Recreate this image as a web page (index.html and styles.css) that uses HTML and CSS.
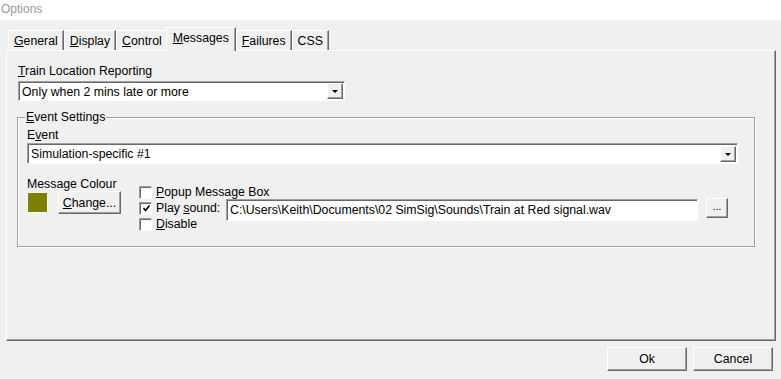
FILE: index.html
```html
<!DOCTYPE html>
<html lang="en">
<head>
<meta charset="utf-8">
<title>Options</title>
<link rel="stylesheet" href="styles.css">
</head>
<body>
	<div class="titlebar">Options</div>

	<div class="dialog">
		<div class="tabs">
			<div class="tab"><u>G</u>eneral</div>
			<div class="tab"><u>D</u>isplay</div>
			<div class="tab"><u>C</u>ontrol</div>
			<div class="tab active"><u>M</u>essages</div>
			<div class="tab"><u>F</u>ailures</div>
			<div class="tab">CSS</div>
		</div>

		<div class="page">
			<div class="label"><u>T</u>rain Location Reporting</div>
			<div class="combo report">
				<span class="combo-text">Only when 2 mins late or more</span>
				<span class="drop"></span>
			</div>

			<div class="group">
				<span class="legend"><u>E</u>vent Settings</span>
				<div class="label">E<u>v</u>ent</div>
				<div class="combo event">
					<span class="combo-text">Simulation-specific #1</span>
					<span class="drop"></span>
				</div>

				<div class="msg-row">
					<div class="colour-col">
						<div class="label">Message Colour</div>
						<div class="colour-row">
							<span class="swatch"></span>
							<div class="btn change"><u>C</u>hange...</div>
						</div>
					</div>

					<div class="checks">
						<div class="check-row">
							<span class="checkbox"></span>
							<span><u>P</u>opup Message Box</span>
						</div>
						<div class="check-row">
							<span class="checkbox">
								<svg width="9" height="9" viewBox="0 0 9 9"><polyline points="1.5,4 3.5,6.5 7.5,1.5" fill="none" stroke="#000" stroke-width="1.6"/></svg>
							</span>
							<span class="sound-label">Play <u>s</u>ound:</span>
							<div class="edit">C:\Users\Keith\Documents\02 SimSig\Sounds\Train at Red signal.wav</div>
							<div class="btn browse">...</div>
						</div>
						<div class="check-row">
							<span class="checkbox"></span>
							<span><u>D</u>isable</span>
						</div>
					</div>
				</div>
			</div>
		</div>

		<div class="buttons">
			<div class="btn dlg">Ok</div>
			<div class="btn dlg">Cancel</div>
		</div>
	</div>
</body>
</html>
```

FILE: styles.css
```css
* {
	box-sizing: border-box;
}
body {
	margin: 0;
	width: 781px;
	height: 379px;
	overflow: hidden;
	background: #f0f0f0;
	font-family: "Liberation Sans", Arial, sans-serif;
	font-size: 12.3px;
	color: #000;
}
u {
	text-decoration: underline;
	text-underline-offset: 1px;
}
.titlebar {
	height: 20px;
	background: #fff;
	color: #999;
	padding: 1px 0 0 1px;
	line-height: 16px;
	font-size: 12px;
}

/* tabs */
.tabs {
	display: flex;
	align-items: flex-end;
	height: 30px;
	padding-left: 8px;
	position: relative;
	z-index: 2;
}
.tab {
	height: 20px;
	line-height: 20px;
	padding: 0 5px;
	border-top: 1px solid #fff;
	border-left: 1px solid #fff;
	border-right: 1px solid #696969;
	box-shadow: inset -1px 0 #a0a0a0;
}
.tab.active {
	height: 24px;
	line-height: 21px;
	margin: 0 -1px -1px -2px;
	padding: 0 6px;
	background: #f0f0f0;
	position: relative;
	z-index: 3;
}
.tab.active + .tab {
	margin-left: 1px;
}

/* page */
.page {
	margin: 0 5px 0 6px;
	height: 291px;
	padding: 13px 0 0 11px;
	border-top: 1px solid #fff;
	border-left: 1px solid #fff;
	border-right: 1px solid #696969;
	border-bottom: 1px solid #696969;
	box-shadow: inset -1px -1px #a0a0a0;
}
.label {
	line-height: 14px;
	height: 14px;
}

/* combo boxes */
.combo {
	display: flex;
	align-items: center;
	height: 20px;
	margin-top: 3px;
	background: #fff;
	border-top: 1px solid #a0a0a0;
	border-left: 1px solid #a0a0a0;
	border-right: 1px solid #fff;
	border-bottom: 1px solid #fff;
	box-shadow: inset 1px 1px #696969;
	padding: 1px 1px 0 3px;
}
.combo.report {
	width: 327px;
}
.combo.event {
	width: 711px;
	height: 21px;
	margin-top: 1px;
}
.combo-text {
	flex: 1;
}
.drop {
	width: 16px;
	height: 16px;
	background: #f0f0f0;
	border-top: 1px solid #fff;
	border-left: 1px solid #fff;
	border-right: 1px solid #696969;
	border-bottom: 1px solid #696969;
	box-shadow: inset -1px -1px #a0a0a0;
	display: flex;
	align-items: center;
	justify-content: center;
	margin-top: -1px;
}
.drop::after {
	content: "";
	border-left: 3px solid transparent;
	border-right: 3px solid transparent;
	border-top: 3px solid #000;
	margin-top: 1px;
}

/* group box */
.group {
	position: relative;
	width: 738px;
	height: 130px;
	margin: 16px 0 0 -1px;
	padding: 11px 0 0 9px;
	border: 1px solid #a0a0a0;
	box-shadow: inset 1px 1px #fff, 1px 1px #fff;
}
.group .label {
	height: 13px;
	line-height: 13px;
}
.legend {
	position: absolute;
	top: -7px;
	left: 7px;
	padding: 0 1px;
	background: #f0f0f0;
	line-height: 13px;
}
.msg-row {
	display: flex;
	margin-top: 14px;
}
.colour-col {
	width: 112px;
}
.colour-row {
	display: flex;
	align-items: flex-start;
}
.swatch {
	width: 21px;
	height: 21px;
	margin-top: 1px;
	background: #808000;
	border: 1px solid #f8f8f8;
}

/* buttons */
.btn {
	display: flex;
	align-items: center;
	justify-content: center;
	background: #f0f0f0;
	border-top: 1px solid #fff;
	border-left: 1px solid #fff;
	border-right: 1px solid #696969;
	border-bottom: 1px solid #696969;
	box-shadow: inset -1px -1px #a0a0a0;
}
.btn.change {
	width: 63px;
	height: 23px;
	margin-left: 10px;
}
.btn.browse {
	width: 22px;
	height: 20px;
	margin-left: 8px;
	padding-bottom: 4px;
	font-size: 10px;
}

/* check boxes */
.checks {
	margin-top: 6px;
}
.check-row {
	display: flex;
	align-items: center;
	height: 16px;
}
.checkbox {
	width: 13px;
	height: 13px;
	margin-right: 4px;
	background: #fff;
	border-top: 1px solid #a0a0a0;
	border-left: 1px solid #a0a0a0;
	border-right: 1px solid #fff;
	border-bottom: 1px solid #fff;
	box-shadow: inset 1px 1px #696969;
	display: flex;
	align-items: center;
	justify-content: center;
	flex-shrink: 0;
}
.checkbox svg {
	margin: 1px 0 0 1px;
}
.sound-label {
	width: 70px;
}
.edit {
	width: 472px;
	height: 22px;
	margin-top: 3px;
	line-height: 19px;
	padding: 1px 0 0 3px;
	background: #fff;
	border-top: 1px solid #a0a0a0;
	border-left: 1px solid #a0a0a0;
	border-right: 1px solid #fff;
	border-bottom: 1px solid #fff;
	box-shadow: inset 1px 1px #696969;
	white-space: nowrap;
}

/* dialog buttons */
.buttons {
	display: flex;
	justify-content: flex-end;
	gap: 6px;
	padding: 6px 8px 0 0;
}
.btn.dlg {
	width: 80px;
	height: 24px;
}
```
